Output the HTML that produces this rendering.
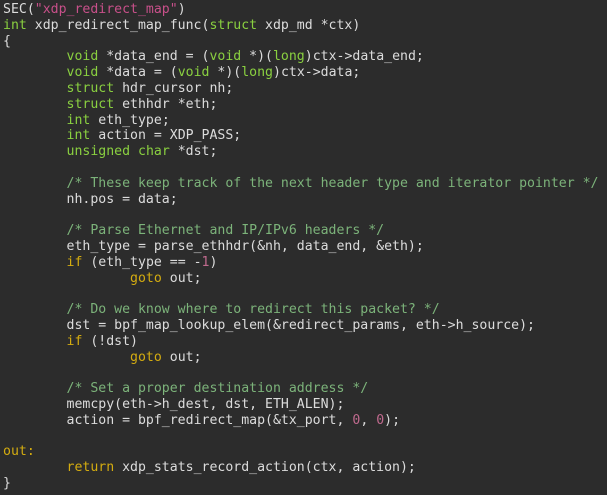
<!DOCTYPE html>
<html><head><meta charset="utf-8"><style>
html,body{margin:0;padding:0;background:#2c2c2c;width:607px;height:495px;overflow:hidden}
pre{margin:0;padding:2px 0 0 3px;font-family:"DejaVu Sans Mono","Liberation Mono",monospace;font-size:13.2px;line-height:15.8px;color:#dcdcdc;tab-size:8}
.t{color:#8ad040}.k{color:#d4ac10}.c{color:#7cb37a}.s{color:#c8508a}.n{color:#c06a8e}
</style></head><body><pre>SEC(<span class="s">"xdp_redirect_map"</span>)
<span class="t">int</span> xdp_redirect_map_func(<span class="t">struct</span> xdp_md *ctx)
{
	<span class="t">void</span> *data_end = (<span class="t">void</span> *)(<span class="t">long</span>)ctx-&gt;data_end;
	<span class="t">void</span> *data = (<span class="t">void</span> *)(<span class="t">long</span>)ctx-&gt;data;
	<span class="t">struct</span> hdr_cursor nh;
	<span class="t">struct</span> ethhdr *eth;
	<span class="t">int</span> eth_type;
	<span class="t">int</span> action = XDP_PASS;
	<span class="t">unsigned</span> <span class="t">char</span> *dst;

	<span class="c">/* These keep track of the next header type and iterator pointer */</span>
	nh.pos = data;

	<span class="c">/* Parse Ethernet and IP/IPv6 headers */</span>
	eth_type = parse_ethhdr(&amp;nh, data_end, &amp;eth);
	<span class="k">if</span> (eth_type == -<span class="n">1</span>)
		<span class="k">goto</span> out;

	<span class="c">/* Do we know where to redirect this packet? */</span>
	dst = bpf_map_lookup_elem(&amp;redirect_params, eth-&gt;h_source);
	<span class="k">if</span> (!dst)
		<span class="k">goto</span> out;

	<span class="c">/* Set a proper destination address */</span>
	memcpy(eth-&gt;h_dest, dst, ETH_ALEN);
	action = bpf_redirect_map(&amp;tx_port, <span class="n">0</span>, <span class="n">0</span>);

<span class="k">out:</span>
	<span class="k">return</span> xdp_stats_record_action(ctx, action);
}</pre></body></html>
